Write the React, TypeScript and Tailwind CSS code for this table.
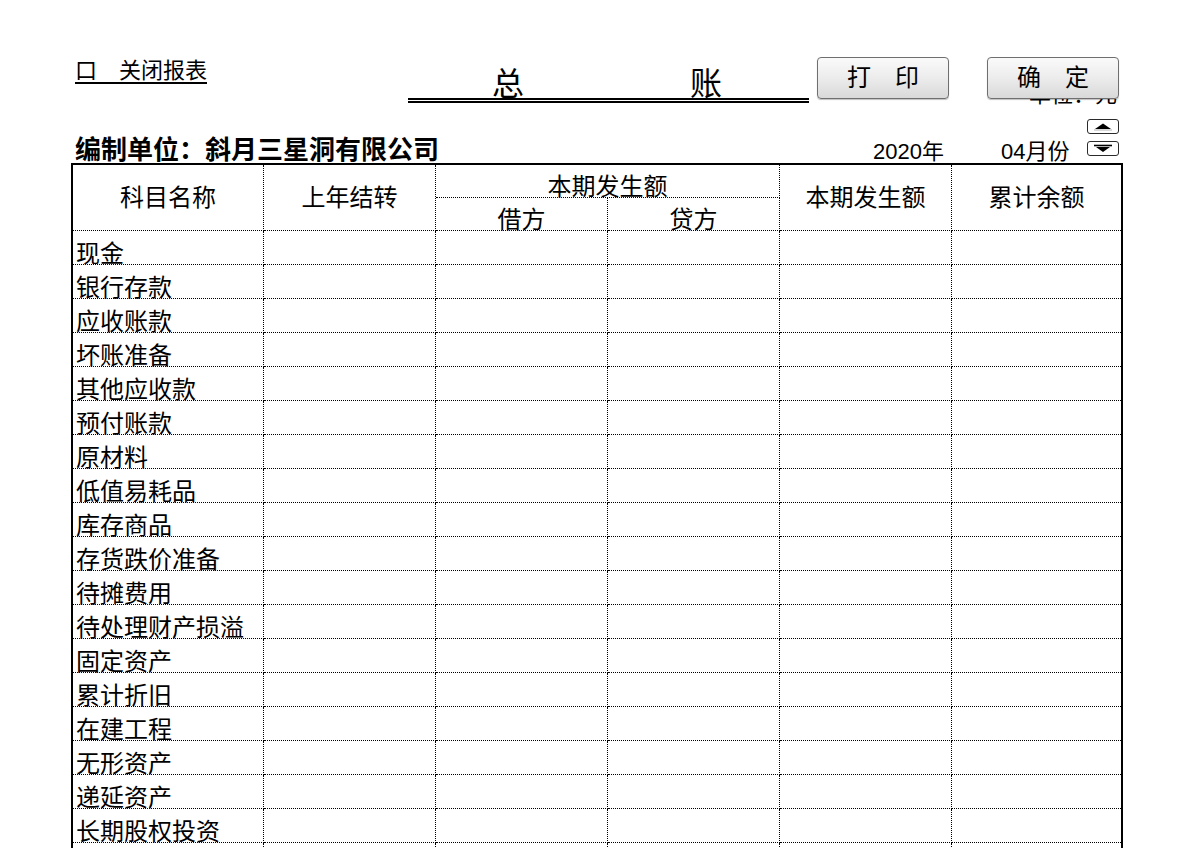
import React from "react";

const rows = [
  "现金",
  "银行存款",
  "应收账款",
  "坏账准备",
  "其他应收款",
  "预付账款",
  "原材料",
  "低值易耗品",
  "库存商品",
  "存货跌价准备",
  "待摊费用",
  "待处理财产损溢",
  "固定资产",
  "累计折旧",
  "在建工程",
  "无形资产",
  "递延资产",
  "长期股权投资",
  "",
];

const cols = "grid grid-cols-[191px_172px_172px_172px_172px_169px]";
const cell = "border-r border-b border-dotted border-black";

function SpinButton({ dir }: { dir: "up" | "down" }) {
  return (
    <button className="flex h-[15px] w-[32px] items-center justify-center rounded-[3px] border-[1.5px] border-[#2a2a2a] bg-white">
      <svg width="22" height="9" viewBox="0 0 22 9">
        {dir === "up" ? (
          <>
            <path d="M3 7 L11 1.5 L19 7 Z" fill="#000" />
            <path d="M2 8 H20" stroke="#bdbdbd" strokeWidth="1.2" />
          </>
        ) : (
          <>
            <path d="M2 1.5 H20" stroke="#000" strokeWidth="1.6" />
            <path d="M4 3 L11 8 L18 3 Z" fill="#000" />
          </>
        )}
      </svg>
    </button>
  );
}

function GrayButton({ label }: { label: string }) {
  return (
    <button className="relative z-10 flex h-[42px] w-[132px] items-center justify-center rounded-[4px] border border-[#6f6f6f] bg-gradient-to-b from-[#fafafa] via-[#ececec] to-[#d9d9d9] text-[24px] leading-none text-black shadow-[0_1px_1px_rgba(0,0,0,0.25)]">
      {label}
    </button>
  );
}

export default function App() {
  return (
    <div
      className="h-[848px] w-[1190px] overflow-hidden bg-white pl-[71px] text-black"
      style={{ fontFamily: '"Liberation Sans", "Noto Sans CJK SC", sans-serif' }}
    >
      {/* top bar */}
      <div className="mt-[57px] flex h-[46px] w-[1052px]">
        <div className="w-[337px] pt-[3px] pl-[4px]">
          <a className="inline-block border-b-2 border-black text-[22px] leading-none">口　关闭报表</a>
        </div>
        <div className="flex h-[46px] w-[401px] items-end border-b-[5px] border-double border-black pl-[84px] text-[32px] leading-none">
          <span className="translate-y-[2px]">总</span>
          <span className="ml-[166px] translate-y-[2px]">账</span>
        </div>
        <div className="ml-[8px]">
          <GrayButton label="打　印" />
        </div>
        <div className="relative ml-[38px]">
          <GrayButton label="确　定" />
          <span className="absolute top-[27px] right-[2px] z-0 text-[22px] leading-none whitespace-nowrap">单位：元</span>
        </div>
      </div>

      {/* report info */}
      <div className="flex h-[60px] w-[1052px] items-end">
        <div className="w-[802px] pl-[4px] text-[26px] leading-none font-bold">编制单位：斜月三星洞有限公司</div>
        <div className="w-[128px] text-[22px] leading-none">2020年</div>
        <div className="w-[86px] text-[22px] leading-none">04月份</div>
        <div className="mb-[7px] flex flex-col gap-[7px]">
          <SpinButton dir="up" />
          <SpinButton dir="down" />
        </div>
      </div>

      {/* ledger table */}
      <div className="w-[1052px] border-t-2 border-r-2 border-l-2 border-black text-[24px] leading-none">
        <div className={`${cols} grid-rows-[33px_33px]`}>
          <div className={`${cell} row-span-2 flex items-center justify-center`}>科目名称</div>
          <div className={`${cell} row-span-2 flex items-center justify-center`}>上年结转</div>
          <div className={`${cell} col-span-2 flex items-end justify-center`}>
            <span className="translate-y-[2px]">本期发生额</span>
          </div>
          <div className={`${cell} row-span-2 flex items-center justify-center`}>本期发生额</div>
          <div className="row-span-2 flex items-center justify-center border-b border-dotted border-black">累计余额</div>
          <div className={`${cell} flex items-end justify-center`}>
            <span className="translate-y-[2px]">借方</span>
          </div>
          <div className={`${cell} flex items-end justify-center`}>
            <span className="translate-y-[2px]">贷方</span>
          </div>
        </div>
        {rows.map((name, i) => (
          <div key={i} className={`${cols} h-[34px]`}>
            <div className={`${cell} flex items-end pl-[3px]`}>
              <span className="translate-y-[2px] whitespace-nowrap">{name}</span>
            </div>
            <div className={cell} />
            <div className={cell} />
            <div className={cell} />
            <div className={cell} />
            <div className="border-b border-dotted border-black" />
          </div>
        ))}
      </div>
    </div>
  );
}
